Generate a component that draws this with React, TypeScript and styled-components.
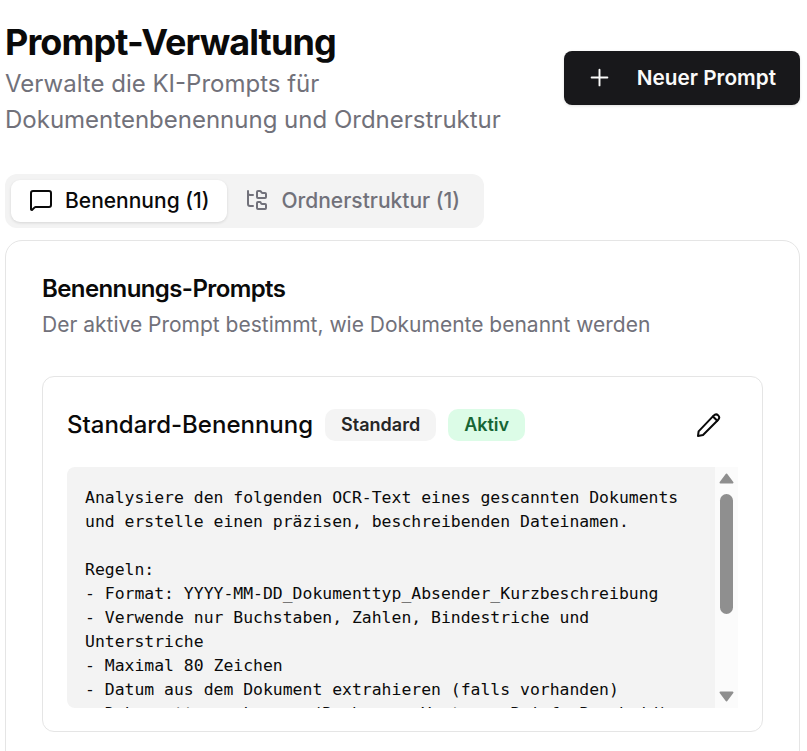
import React from 'react'
import styled, { createGlobalStyle } from 'styled-components'
import { FolderTree, MessageSquare, Plus } from 'lucide-react'

const GlobalStyle = createGlobalStyle`
  html, body {
    margin: 0;
    padding: 0;
    background: #fff;
    overflow: hidden;
  }
  body {
    font-family: Inter, 'Liberation Sans', sans-serif;
    color: #0a0a0a;
  }
`

const Page = styled.div`
  width: 807px;
  height: 751px;
  box-sizing: border-box;
  padding: 22px 7px 0 5px;
  overflow: hidden;
`

const Header = styled.header`
  display: flex;
  justify-content: space-between;
  align-items: flex-start;
`

const Title = styled.h1`
  margin: 0;
  font-size: 36px;
  line-height: 40px;
  font-weight: 700;
  letter-spacing: -0.9px;
`

const Subtitle = styled.p`
  margin: 4px 0 0;
  width: 540px;
  font-size: 24px;
  line-height: 36px;
  color: #71717a;
`

const PrimaryButton = styled.button`
  display: flex;
  align-items: center;
  gap: 24px;
  height: 54px;
  margin-top: 29px;
  padding: 0 24px 2px 22px;
  border: 0;
  border-radius: 8px;
  background: #18181b;
  color: #fafafa;
  font: 600 20.75px Inter, sans-serif;
  box-shadow: 0 1px 3px rgba(0, 0, 0, 0.12);
`

const TabList = styled.div`
  display: inline-flex;
  margin-top: 36px;
  padding: 6px;
  border-radius: 12px;
  background: #f3f3f3;
`

const Tab = styled.div<{ $active?: boolean }>`
  display: flex;
  align-items: center;
  gap: 12px;
  height: 42px;
  padding: 0 18px 2px 18px;
  box-sizing: border-box;
  border-radius: 9px;
  font-size: 21px;
  font-weight: 500;
  color: ${(p) => (p.$active ? '#0a0a0a' : '#71717a')};
  background: ${(p) => (p.$active ? '#fff' : 'transparent')};
  box-shadow: ${(p) => (p.$active ? '0 1px 3px rgba(0, 0, 0, 0.12)' : 'none')};
`

const Card = styled.section`
  margin-top: 12px;
  padding: 33px 36px 0;
  border: 1px solid #e5e5e5;
  border-radius: 17px;
  background: #fff;
`

const CardTitle = styled.h2`
  margin: 0;
  font-size: 24px;
  line-height: 30px;
  font-weight: 600;
  letter-spacing: -0.6px;
`

const CardDescription = styled.p`
  margin: 7px 0 0;
  font-size: 21px;
  line-height: 28px;
  color: #71717a;
`

const PromptCard = styled.article`
  margin: 37px 0 38px;
  padding: 24px 24px 23px;
  border: 1px solid #e5e5e5;
  border-radius: 12px;
`

const PromptHeader = styled.div`
  display: flex;
  align-items: center;
  gap: 12px;
  height: 48px;
  margin-bottom: 18px;
`

const PromptName = styled.h3`
  margin: 0;
  font-size: 24px;
  line-height: 32px;
  font-weight: 500;
`

const Badge = styled.span<{ $tone: 'neutral' | 'success' }>`
  padding: 4px 16px;
  border-radius: 10px;
  font-size: 18px;
  line-height: 24px;
  font-weight: 600;
  color: ${(p) => (p.$tone === 'success' ? '#166534' : '#262626')};
  background: ${(p) => (p.$tone === 'success' ? '#dcfce7' : '#f4f4f4')};
`

const EditButton = styled.button`
  display: flex;
  align-items: center;
  justify-content: center;
  width: 48px;
  height: 48px;
  margin-left: auto;
  margin-right: 6px;
  padding: 0;
  border: 0;
  background: transparent;
  color: #0a0a0a;
`

const PromptBody = styled.div`
  display: flex;
  height: 241px;
  overflow: hidden;
`

const PromptText = styled.pre`
  flex: 1;
  margin: 0;
  padding: 19px 18px 0;
  overflow: hidden;
  border-radius: 8px 0 0 8px;
  background: #f3f3f3;
  font-family: 'DejaVu Sans Mono', monospace;
  font-size: 16.43px;
  line-height: 24px;
  white-space: pre-wrap;
`

const ScrollTrack = styled.div`
  display: flex;
  flex-direction: column;
  align-items: center;
  width: 23px;
  padding: 6px 0 6px;
  box-sizing: border-box;
  background: #fbfbfb;
`

const ScrollThumb = styled.div`
  width: 13px;
  height: 120px;
  margin: 10px 0 auto;
  border-radius: 7px;
  background: #8f8f8f;
`

const Arrow = styled.svg`
  display: block;
`

const promptText = `Analysiere den folgenden OCR-Text eines gescannten Dokuments
und erstelle einen präzisen, beschreibenden Dateinamen.

Regeln:
- Format: YYYY-MM-DD_Dokumenttyp_Absender_Kurzbeschreibung
- Verwende nur Buchstaben, Zahlen, Bindestriche und
Unterstriche
- Maximal 80 Zeichen
- Datum aus dem Dokument extrahieren (falls vorhanden)
- Dokumenttyp erkennen (Rechnung, Vertrag, Brief, Bescheid)`

export default function App() {
  return (
    <Page>
      <GlobalStyle />
      <Header>
        <div>
          <Title>Prompt-Verwaltung</Title>
          <Subtitle>Verwalte die KI-Prompts für Dokumentenbenennung und Ordnerstruktur</Subtitle>
        </div>
        <PrimaryButton>
          <Plus size={27} strokeWidth={1.7} />
          Neuer Prompt
        </PrimaryButton>
      </Header>
      <TabList>
        <Tab $active>
          <MessageSquare size={24} strokeWidth={2} />
          Benennung (1)
        </Tab>
        <Tab>
          <FolderTree size={24} strokeWidth={2} />
          Ordnerstruktur (1)
        </Tab>
      </TabList>
      <Card>
        <CardTitle>Benennungs-Prompts</CardTitle>
        <CardDescription>Der aktive Prompt bestimmt, wie Dokumente benannt werden</CardDescription>
        <PromptCard>
          <PromptHeader>
            <PromptName>Standard-Benennung</PromptName>
            <Badge $tone="neutral">Standard</Badge>
            <Badge $tone="success">Aktiv</Badge>
            <EditButton aria-label="Bearbeiten">
              <svg width="26" height="26" viewBox="0 0 26 26" fill="none" stroke="currentColor" strokeWidth="2" strokeLinejoin="round" strokeLinecap="round">
                <path d="M3 24 L3.6 19.4 L18.6 3.6 C20 2.2 22 2.2 23.2 3.4 C24.4 4.6 24.4 6.6 23 8 L8 23 Z" />
                <path d="M18 4.5 L22.2 8.7" />
              </svg>
            </EditButton>
          </PromptHeader>
          <PromptBody>
            <PromptText>{promptText}</PromptText>
            <ScrollTrack>
              <Arrow width="15" height="11" viewBox="0 0 15 11">
                <path d="M7.5 1.5 L13.5 9.5 H1.5 Z" fill="#8f8f8f" stroke="#8f8f8f" strokeWidth="2" strokeLinejoin="round" />
              </Arrow>
              <ScrollThumb />
              <Arrow width="15" height="11" viewBox="0 0 15 11">
                <path d="M7.5 9.5 L13.5 1.5 H1.5 Z" fill="#8f8f8f" stroke="#8f8f8f" strokeWidth="2" strokeLinejoin="round" />
              </Arrow>
            </ScrollTrack>
          </PromptBody>
        </PromptCard>
      </Card>
    </Page>
  )
}
